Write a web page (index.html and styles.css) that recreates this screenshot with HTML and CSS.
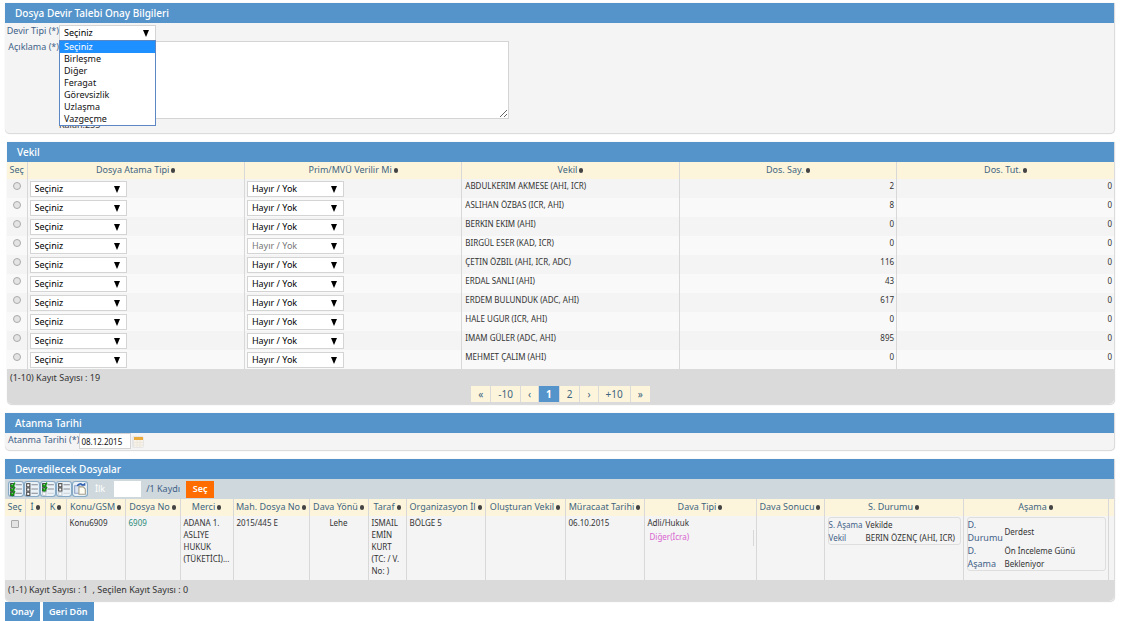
FILE: index.html
```
<!DOCTYPE html>
<html lang="tr">
<head>
<meta charset="utf-8">
<title>Dosya Devir Talebi</title>
<link rel="stylesheet" href="styles.css">
</head>
<body>
<svg class="defs" aria-hidden="true">
  <defs>
    <g id="frame"><rect x=".5" y=".5" width="14" height="14" rx="2.500" fill="#eaf2f8" stroke="#86a9c6"/></g>
    <g id="on"><rect width="3" height="3" fill="#cfeccf" stroke="#333"/><path d="M0 1l1.500 2L4-1" fill="none" stroke="#0c9a0c" stroke-width="1.500"/></g>
    <g id="off"><rect width="3" height="3" fill="#fff" stroke="#444"/></g>
    <g id="dim"><rect width="3" height="3" fill="#fff" stroke="#c3ccd5"/></g>
  </defs>
</svg>
<form class="page">
  <section class="panel request">
    <h2 class="title">Dosya Devir Talebi Onay Bilgileri</h2>
    <div class="fields">
      <label class="label" for="tip">Devir Tipi (*)</label>
      <div class="combo">
        <span class="pick"><select id="tip"><option>Seçiniz</option></select></span>
        <ul class="menu">
          <li class="chosen">Seçiniz</li><li>Birleşme</li><li>Diğer</li><li>Feragat</li><li>Görevsizlik</li><li>Uzlaşma</li><li>Vazgeçme</li>
        </ul>
      </div>
      <label class="label tall" for="aciklama">Açıklama (*)</label>
      <div class="note"><textarea id="aciklama"></textarea><span>Kalan:255</span></div>
    </div>
  </section>

  <section class="panel vekil">
    <h2 class="title">Vekil</h2>
    <table class="grid agents">
      <colgroup><col class="c-pick"><col><col><col><col><col></colgroup>
      <thead><tr><th>Seç</th><th class="sort">Dosya Atama Tipi</th><th class="sort">Prim/MVÜ Verilir Mi</th><th class="sort">Vekil</th><th class="sort">Dos. Say.</th><th class="sort">Dos. Tut.</th></tr></thead>
      <tbody id="rows"></tbody>
    </table>
    <div class="foot">
      <p>(1-10) Kayıt Sayısı : 19</p>
      <nav class="pager">
        <a href="#">«</a><a href="#">-10</a><a href="#">‹</a><a href="#" class="current">1</a><a href="#">2</a><a href="#">›</a><a href="#">+10</a><a href="#">»</a>
      </nav>
    </div>
  </section>

  <section class="panel date">
    <h2 class="title">Atanma Tarihi</h2>
    <div class="line">
      <label class="label" for="tarih">Atanma Tarihi (*)</label>
      <input class="day" id="tarih" type="text" value="08.12.2015">
      <button class="cal" type="button" aria-label="Takvim"><svg width="12" height="12" viewBox="0 0 12 12"><rect x="2" y="1" width="9" height="10" fill="#f7f3ea"/><path d="M2 1h9v3H2z" fill="#e9ab3c"/><path d="M2 6.500h9M2 9h9M5 4v7M8 4v7" stroke="#eee8dc"/></svg></button>
    </div>
  </section>

  <section class="panel files">
    <h2 class="title">Devredilecek Dosyalar</h2>
    <div class="tools">
      <button class="ico" type="button" aria-label="Tümünü seç"><svg viewBox="0 0 15 15"><use href="#frame"/><use href="#on" x="2.500" y="2.500"/><use href="#on" x="2.500" y="6.500"/><use href="#on" x="2.500" y="10.500"/><path d="M7 3.500h6M7 7.500h6M7 11.500h6" stroke="#85898e"/></svg></button>
      <button class="ico" type="button" aria-label="Tümünü bırak"><svg viewBox="0 0 15 15"><use href="#frame"/><use href="#off" x="2.500" y="2.500"/><use href="#off" x="2.500" y="6.500"/><use href="#off" x="2.500" y="10.500"/><path d="M7 3.500h6M7 7.500h6M7 11.500h6" stroke="#85898e"/></svg></button>
      <button class="ico" type="button" aria-label="Sayfayı seç"><svg viewBox="0 0 15 15"><use href="#frame"/><use href="#on" x="2.500" y="2.500"/><use href="#on" x="2.500" y="6.500"/><use href="#dim" x="2.500" y="10.500"/><path d="M7 3.500h6M7 7.500h6" stroke="#85898e"/><path d="M7 11.500h6" stroke="#ccd3da"/></svg></button>
      <button class="ico" type="button" aria-label="Sayfayı bırak"><svg viewBox="0 0 15 15"><use href="#frame"/><use href="#off" x="2.500" y="2.500"/><use href="#off" x="2.500" y="6.500"/><use href="#dim" x="2.500" y="10.500"/><path d="M7 3.500h6M7 7.500h6" stroke="#85898e"/><path d="M7 11.500h6" stroke="#ccd3da"/></svg></button>
      <button class="ico" type="button" aria-label="Aktar"><svg viewBox="0 0 15 15"><use href="#frame"/><path d="M2.500 4.500h5v7h-5z" fill="#dbe4f3" stroke="#8fa3c6"/><path d="M6.500 5.500h4l2 2v5h-6z" fill="#fffdf2" stroke="#a39f8c"/><path d="M5 4.500c1-2 3.500-2.500 5-.500" fill="none" stroke="#2f5fae" stroke-width="1.500"/><path d="M8.500 4.500h4v-3z" fill="#2f5fae"/></svg></button>
      <label class="first" for="ilk">İlk</label>
      <input class="count" id="ilk" type="text">
      <span class="total">/1 Kaydı</span>
      <button class="go" type="button">Seç</button>
    </div>
    <table class="grid cases">
      <colgroup><col class="w20"><col class="w20"><col class="w21"><col class="w59"><col class="w55"><col class="w53"><col class="w76"><col class="w59"><col class="w38"><col class="w79"><col class="w80"><col class="w79"><col class="w112"><col class="w68"><col class="w139"><col class="w145"><col class="w6"></colgroup>
      <thead><tr><th>Seç</th><th class="sort">İ</th><th class="sort">K</th><th class="sort">Konu/GSM</th><th class="sort">Dosya No</th><th class="sort">Merci</th><th class="sort">Mah. Dosya No</th><th class="sort">Dava Yönü</th><th class="sort">Taraf</th><th class="sort">Organizasyon İl</th><th class="sort">Oluşturan Vekil</th><th class="sort">Müracaat Tarihi</th><th class="sort">Dava Tipi</th><th class="sort">Dava Sonucu</th><th class="sort">S. Durumu</th><th class="sort">Aşama</th><th></th></tr></thead>
      <tbody><tr>
        <td class="mid"><input class="tick" type="checkbox" aria-label="Dosya 6909"></td><td></td><td></td><td>Konu6909</td><td><a class="no" href="#">6909</a></td><td>ADANA 1. ASLIYE HUKUK (TÜKETİCİ)...</td><td>2015/445 E</td><td class="mid">Lehe</td><td>ISMAIL EMİN KURT (TC: / V. No: )</td><td>BÖLGE 5</td><td></td><td>06.10.2015</td>
        <td>Adli/Hukuk<div class="kind">Diğer(İcra)</div></td><td></td>
        <td><dl class="box"><dt class="whole">S. Aşama</dt><dd>Vekilde</dd><dt>Vekil</dt><dd>BERIN ÖZENÇ (AHI, ICR)</dd></dl></td>
        <td><dl class="box stage"><dt>D. Durumu</dt><dd>Derdest</dd><dt>D. Aşama</dt><dd>Ön İnceleme Günü Bekleniyor</dd></dl></td><td></td>
      </tr></tbody>
    </table>
    <div class="foot short"><p>(1-1) Kayıt Sayısı : 1 &nbsp;, Seçilen Kayıt Sayısı : 0</p></div>
  </section>
  <div class="actions"><button type="button">Onay</button><button type="button">Geri Dön</button></div>
</form>
<script src="rows.js"></script>
</body>
</html>
```
FILE: rows.js
```
const agents = [
  ["ABDULKERIM AKMESE (AHI, ICR)", 2], ["ASLIHAN ÖZBAS (ICR, AHI)", 8],
  ["BERKIN EKIM (AHI)", 0], ["BIRGÜL ESER (KAD, ICR)", 0],
  ["ÇETIN ÖZBIL (AHI, ICR, ADC)", 116], ["ERDAL SANLI (AHI)", 43],
  ["ERDEM BULUNDUK (ADC, AHI)", 617], ["HALE UGUR (ICR, AHI)", 0],
  ["IMAM GÜLER (ADC, AHI)", 895], ["MEHMET ÇALIM (AHI)", 0]
];
document.getElementById("rows").innerHTML = agents.map(([name, files], i) => `<tr>
  <td class="mid"><input class="radio" type="radio" name="agent" aria-label="${name}"></td>
  <td class="ctl"><span class="pick"><select aria-label="Dosya Atama Tipi"><option>Seçiniz</option></select></span></td>
  <td class="ctl"><span class="pick"><select aria-label="Prim/MVÜ Verilir Mi"${i === 3 ? " disabled" : ""}><option>Hayır / Yok</option></select></span></td>
  <td>${name}</td><td class="num">${files}</td><td class="num">0</td></tr>`).join("");
```
FILE: styles.css
```
* { box-sizing: border-box; }
body { margin: 0; background: #fff; font: 9px/12px "Noto Sans", "Open Sans", sans-serif; color: #333; }
h2, p, ul, dl, dd { margin: 0; padding: 0; }
button, input, select, textarea { font: inherit; margin: 0; border-radius: 0; }
a { text-decoration: none; }
.defs { position: absolute; width: 0; height: 0; }
.page { padding: 3px 8px 0 5px; }
.panel { background: #f4f4f4; border: solid #dcdcdc; border-width: 0 1px 1px 0; border-radius: 0 0 5px 5px; box-shadow: 0 0 1px #ccc; }
.title { height: 20px; padding-left: 10px; background: #5594ca; color: #fff; font-size: 10px; font-weight: 500; line-height: 21px; }
.label { color: #3f6288; }

.request { margin-bottom: 8px; }
.fields { display: grid; grid-template-columns: 54px 450px; grid-template-rows: 18px auto; justify-items: start; height: 110px; }
.fields .label { justify-self: end; padding: 2px 0 0; white-space: nowrap; }
.fields .tall { padding-top: 0; }
.combo { position: relative; padding-top: 2px; }
.pick { display: inline-flex; position: relative; width: 97px; height: 16px; vertical-align: top; }
.pick::after { content: ""; position: absolute; right: 7px; top: 5px; border: solid transparent; border-width: 7px 3px 0; border-top-color: #000; pointer-events: none; }
.pick select { appearance: none; width: 100%; padding: 0 0 0 4px; border: 1px solid #d4d4d4; background: #fff; color: #000; }
.pick select:disabled { color: #777; opacity: 1; }
.menu { position: absolute; left: 0; top: 17px; z-index: 2; width: 97px; border: 1px solid #5d86c4; background: #fff; color: #111; list-style: none; }
.menu li { height: 12px; padding-left: 4px; }
.menu .chosen { background: #1e90ff; color: #fff; }
.note { display: flex; flex-direction: column; width: 100%; }
.note textarea { width: 100%; height: 78px; border: 1px solid #d4d4d4; background: #fff; }

.grid { width: 100%; border-collapse: collapse; table-layout: fixed; }
.grid th { height: 17px; padding: 0 0 1px; background: #fcf5dc; color: #3f6580; font-weight: 400; white-space: nowrap; }
.grid th, .grid td { border-right: 1px solid #d8d8d8; }
.grid th:last-child, .grid td:last-child { border-right: 0; }
.sort::after { content: ""; display: inline-block; width: 4px; height: 5px; margin-left: 2px; border-radius: 2px; background: #444; }
.grid td { padding: 1px 2px 1px 3px; vertical-align: top; font-size: 8px; }
.grid .mid { padding: 1px 2px; text-align: center; }
.grid .num { text-align: right; }
.vekil { margin: 0 0 8px 2px; }
.c-pick { width: 20px; }
.agents td { height: 19px; }
.agents tbody tr:nth-child(even) { background: #f9f9f9; }
.agents .ctl { padding: 2px 2px 1px; font-size: 9px; }
.radio, .tick { appearance: none; width: 8px; height: 8px; border: 1px solid #aaa; background: #e4e4e4; }
.radio { border-radius: 50%; margin-top: 2px; }
.tick { margin-top: 3px; border-radius: 1px; }
.foot { height: 35px; padding: 3px 3px 0; background: #dadada; border-radius: 0 0 5px 5px; }
.foot.short { height: 21px; padding-top: 4px; }
.pager { display: flex; justify-content: center; gap: 1px; margin-top: 2px; }
.pager a { height: 16px; padding: 0 7px; background: #fcf5dc; color: #3f6580; font-size: 10px; line-height: 16px; }
.pager .current { background: #5594ca; color: #fff; font-weight: 700; }

.date { margin-bottom: 8px; }
.line { display: flex; height: 17px; padding-left: 3px; }
.line .label { padding-top: 1px; }
.day { width: 52px; height: 16px; padding: 0 0 0 1px; border: 1px solid #d4d4d4; background: #fff; color: #111; font-size: 8px; }
.cal { display: grid; place-items: center; width: 12px; height: 12px; margin: 3px 0 0 1px; padding: 0; border: 0; border-radius: 2px; background: #e6e6e6; }

.tools { display: flex; align-items: center; height: 20px; padding-left: 3px; background: #cfd8dc; }
.ico { width: 16px; height: 16px; padding: 0; border: 0; background: none; }
.ico svg { display: block; width: 16px; height: 16px; }
.first { margin: 0 9px 0 7px; color: #fff; }
.count { width: 27px; height: 16px; border: 0; background: #fff; }
.total { margin: 0 6px 0 5px; color: #3f6288; }
.go { width: 28px; height: 17px; padding: 0; border: 0; background: #ff6d00; color: #fff; font-weight: 600; }
.w20 { width: 20px; } .w21 { width: 21px; } .w59 { width: 59px; } .w55 { width: 55px; } .w53 { width: 53px; }
.w76 { width: 76px; } .w38 { width: 38px; } .w79 { width: 79px; } .w80 { width: 80px; } .w112 { width: 112px; }
.w68 { width: 68px; } .w139 { width: 139px; } .w145 { width: 145px; } .w6 { width: 6px; }
.cases td { height: 64px; }
.no { color: #2a8a78; }
.kind { height: 16px; margin-top: 1px; padding: 1px 2px; border-right: 1px solid #d8d8d8; color: #d964d0; }
.box { display: grid; grid-template-columns: 37px 1fr; align-items: center; border: 1px solid #dedede; border-radius: 3px; line-height: 13px; }
.box dt { color: #3f6288; }
.box dd { white-space: nowrap; }
.stage { grid-template-columns: 37px 1fr; }
.stage dt { width: 32px; font-size: 9px; }
.stage dd { width: 76px; white-space: normal; }

.actions { display: flex; gap: 3px; }
.actions button { height: 19px; padding: 0 6px; border: 0; background: #5594ca; color: #fff; font-weight: 600; }
```
